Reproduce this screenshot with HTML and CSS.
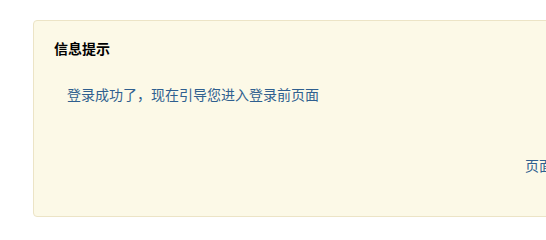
FILE: index.html
```html
<!DOCTYPE html>
<html lang="zh-CN">
<head>
<meta charset="utf-8">
<title>信息提示</title>
<link rel="stylesheet" href="styles.css">
</head>
<body>
<div class="page">
  <div class="notice">
    <h2 class="notice-title">信息提示</h2>
    <p class="notice-msg">登录成功了，现在引导您进入登录前页面</p>
    <p class="notice-jump"><a href="#">页面没有自动跳转，请点击这里</a></p>
  </div>
</div>
</body>
</html>
```
FILE: styles.css
```css
html, body {
  margin: 0;
  padding: 0;
  overflow: hidden;
  background: #ffffff;
}
body {
  font-family: "Noto Sans CJK SC", "Liberation Sans", sans-serif;
  font-size: 14px;
  width: 546px;
  height: 231px;
}
.page {
  padding: 20px 0 0 33px;
  width: 900px;
}
.notice {
  box-sizing: border-box;
  width: 800px;
  height: 197px;
  border: 1px solid #ece4c6;
  border-radius: 4px;
  background: #fcf9e7;
  padding: 17px 20px 0 20px;
}
.notice-title {
  margin: 0;
  font-size: 14px;
  line-height: 20px;
  font-weight: bold;
  color: #000000;
}
.notice-msg {
  margin: 26px 0 0 0;
  padding-left: 13px;
  font-size: 14px;
  line-height: 20px;
  color: #2f5f8f;
}
.notice-jump {
  margin: 51px 0 0 0;
  padding-left: 471px;
  font-size: 14px;
  line-height: 20px;
  white-space: nowrap;
}
.notice-jump a {
  color: #2f5f8f;
  text-decoration: none;
}
```
